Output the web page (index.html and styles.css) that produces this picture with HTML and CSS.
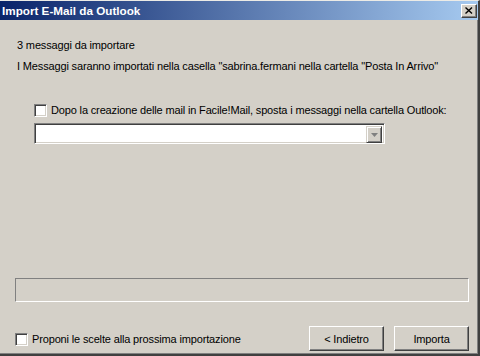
FILE: index.html
```html
<!DOCTYPE html>
<html>
<head>
<meta charset="utf-8">
<link rel="stylesheet" href="styles.css">
</head>
<body>
<div class="window">
  <div class="titlebar">
    <span class="title">Import E-Mail da Outlook</span>
    <span class="close"><svg width="8" height="7" viewBox="0 0 8 7"><path d="M0.5 0.5 L7 6.5 M7 0.5 L0.5 6.5" stroke="#000" stroke-width="1.4" fill="none"/></svg></span>
  </div>
  <div class="content">
    <p class="line first">3 messaggi da importare</p>
    <p class="line second">I Messaggi saranno importati nella casella "sabrina.fermani nella cartella "Posta In Arrivo"</p>
    <div class="check-row inner">
      <span class="checkbox"></span>
      <span class="label">Dopo la creazione delle mail in Facile!Mail, sposta i messaggi nella cartella Outlook:</span>
    </div>
    <div class="combo">
      <span class="combo-field"></span>
      <span class="combo-btn"><svg width="7" height="4" viewBox="0 0 7 4"><path d="M0 0 H7 L3.5 4 Z" fill="#808080"/></svg></span>
    </div>
    <div class="spacer"></div>
    <div class="progress"></div>
    <div class="footer">
      <div class="check-row">
        <span class="checkbox"></span>
        <span class="label">Proponi le scelte alla prossima importazione</span>
      </div>
      <div class="buttons">
        <button class="btn">&lt; Indietro</button>
        <button class="btn">Importa</button>
      </div>
    </div>
  </div>
</div>
</body>
</html>
```

FILE: styles.css
```css
html, body {
  margin: 0;
  padding: 0;
  background: #d4d0c8;
}
.window {
  box-sizing: border-box;
  width: 480px;
  height: 356px;
  background: #d4d0c8;
  border-top: 1px solid #ecebe6;
  border-right: 2px solid #404040;
  border-bottom: 2px solid #404040;
  box-shadow: inset -1px -1px #808080;
  display: flex;
  flex-direction: column;
  font-family: "Liberation Sans", Arial, sans-serif;
  font-size: 11px;
  letter-spacing: -0.15px;
  color: #000;
}
.titlebar {
  height: 19px;
  flex: none;
  background: linear-gradient(to right, #0a246a, #a6caf0);
  display: flex;
  align-items: center;
  justify-content: space-between;
}
.title {
  color: #fff;
  font-weight: bold;
  font-size: 11.7px;
  letter-spacing: 0;
  padding-left: 2px;
  line-height: 19px;
}
.close {
  box-sizing: border-box;
  width: 16px;
  height: 14px;
  margin-right: 1px;
  background: #d4d0c8;
  border-top: 1px solid #fff;
  border-left: 1px solid #fff;
  border-right: 1px solid #404040;
  border-bottom: 1px solid #404040;
  box-shadow: inset -1px -1px #808080;
  display: flex;
  align-items: center;
  justify-content: center;
}
.content {
  flex: 1;
  display: flex;
  flex-direction: column;
  padding: 0 9px 3px 15px;
}
.line {
  margin: 0;
  line-height: 13px;
  padding-left: 2px;
  white-space: nowrap;
}
.first { margin-top: 19px; }
.second { margin-top: 8px; }
.check-row {
  display: flex;
  align-items: center;
  gap: 4px;
  line-height: 13px;
}
.inner {
  margin-top: 31px;
  margin-left: 19px;
}
.checkbox {
  box-sizing: border-box;
  width: 13px;
  height: 13px;
  flex: none;
  background: #fff;
  border-top: 1px solid #808080;
  border-left: 1px solid #808080;
  border-right: 1px solid #fff;
  border-bottom: 1px solid #fff;
  box-shadow: inset 1px 1px #404040, inset -1px -1px #d4d0c8;
}
.combo {
  box-sizing: border-box;
  margin-top: 6px;
  margin-left: 19px;
  width: 351px;
  height: 21px;
  background: #fff;
  border-top: 1px solid #808080;
  border-left: 1px solid #808080;
  border-right: 1px solid #fff;
  border-bottom: 1px solid #fff;
  box-shadow: inset 1px 1px #404040, inset -1px -1px #d4d0c8;
  display: flex;
  padding: 2px;
}
.combo-field { flex: 1; }
.combo-btn {
  box-sizing: border-box;
  width: 16px;
  height: 17px;
  background: #d4d0c8;
  border-top: 1px solid #d4d0c8;
  border-left: 1px solid #d4d0c8;
  border-right: 1px solid #404040;
  border-bottom: 1px solid #404040;
  box-shadow: inset 1px 1px #fff, inset -1px -1px #808080;
  display: flex;
  align-items: center;
  justify-content: center;
}
.spacer { flex: 1; }
.progress {
  box-sizing: border-box;
  height: 24px;
  border-top: 1px solid #808080;
  border-left: 1px solid #808080;
  border-right: 1px solid #fff;
  border-bottom: 1px solid #fff;
}
.footer {
  margin-top: 24px;
  display: flex;
  justify-content: space-between;
  align-items: flex-start;
}
.footer .check-row {
  margin-top: 7px;
}
.buttons {
  display: flex;
  gap: 10px;
}
.btn {
  box-sizing: border-box;
  width: 75px;
  height: 25px;
  padding: 0;
  font-family: "Liberation Sans", Arial, sans-serif;
  font-size: 11px;
  letter-spacing: -0.15px;
  color: #000;
  background: #d4d0c8;
  border-top: 1px solid #fff;
  border-left: 1px solid #fff;
  border-right: 1px solid #404040;
  border-bottom: 1px solid #404040;
  box-shadow: inset -1px -1px #808080;
  border-radius: 0;
}
```
